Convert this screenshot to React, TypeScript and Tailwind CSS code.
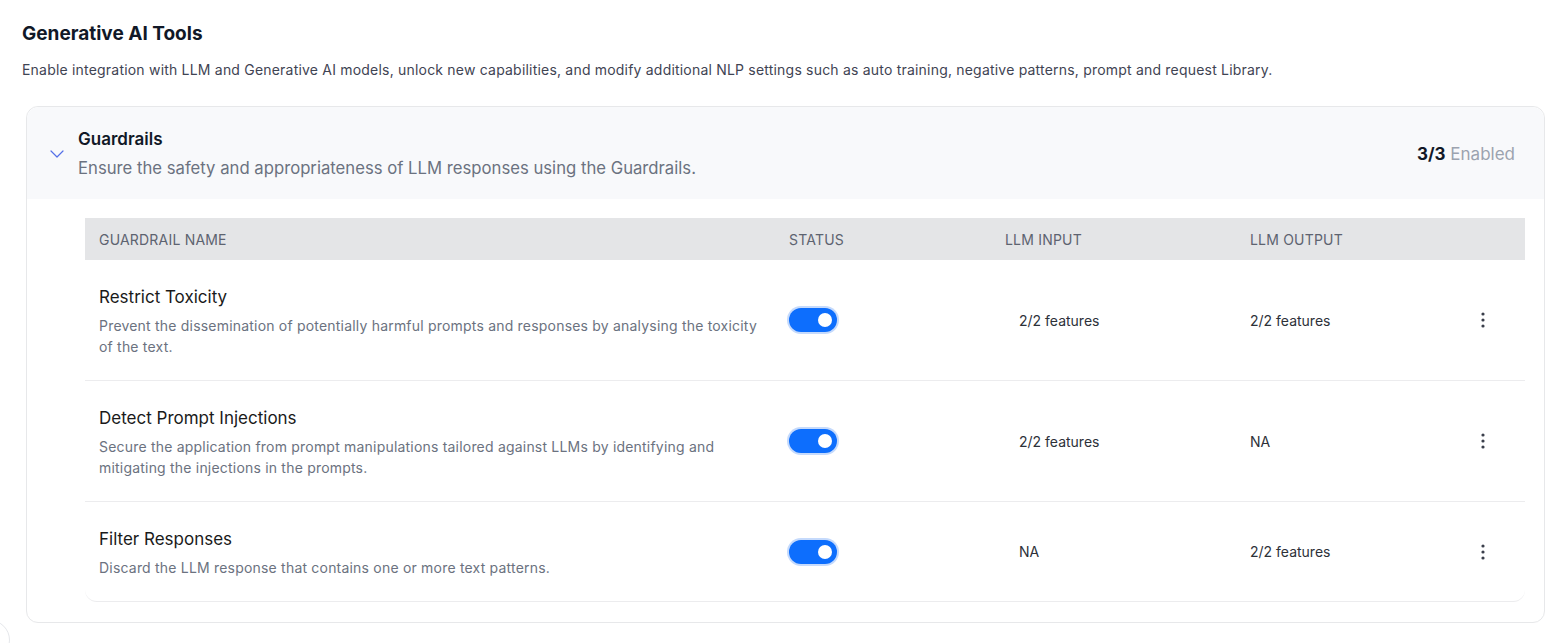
import React from "react";

const rows = [
  {
    title: "Restrict Toxicity",
    desc: "Prevent the dissemination of potentially harmful prompts and responses by analysing the toxicity of the text.",
    input: "2/2 features",
    output: "2/2 features",
  },
  {
    title: "Detect Prompt Injections",
    desc: "Secure the application from prompt manipulations tailored against LLMs by identifying and mitigating the injections in the prompts.",
    input: "2/2 features",
    output: "NA",
  },
  {
    title: "Filter Responses",
    desc: "Discard the LLM response that contains one or more text patterns.",
    input: "NA",
    output: "2/2 features",
  },
];

function Toggle() {
  return (
    <div className="w-[48px] h-[24px] rounded-full bg-[#0d6efd] ring-2 ring-[#c5dafc] flex items-center justify-end pr-[5px]">
      <div className="w-[14px] h-[14px] rounded-full bg-white" />
    </div>
  );
}

function Kebab() {
  return (
    <svg width="4" height="16" viewBox="0 0 4 16" fill="#3a3f4b">
      <circle cx="2" cy="2" r="1.6" />
      <circle cx="2" cy="8" r="1.6" />
      <circle cx="2" cy="14" r="1.6" />
    </svg>
  );
}

export default function App() {
  return (
    <div
      className="relative w-[1560px] h-[643px] overflow-hidden bg-white pl-[22px] pt-[20px]"
      style={{ fontFamily: "Inter, 'Noto Sans', sans-serif" }}
    >
      <h1 className="text-[19px] leading-[28px] font-bold text-[#111827]">Generative AI Tools</h1>
      <p className="mt-[12px] text-[14px] leading-[20px] tracking-[0.2px] text-[#3f4453]">
        Enable integration with LLM and Generative AI models, unlock new capabilities, and modify additional NLP settings such as auto training, negative patterns, prompt and request Library.
      </p>

      <div className="mt-[26px] ml-[4px] w-[1519px] rounded-xl border border-[#e7e8ea] pb-[20px]">
        <div className="flex items-center rounded-t-xl bg-[#f8f9fb] pt-[20px] pb-[19px] pl-[23px] pr-[29px]">
          <svg width="14" height="8" viewBox="0 0 14 8" fill="none" className="mr-[14px] mt-[1px]">
            <path d="M1 1l6 6 6-6" stroke="#5470e8" strokeWidth="1.2" strokeLinecap="round" strokeLinejoin="round" />
          </svg>
          <div className="flex-1 flex flex-col gap-[4px]">
            <div className="text-[17px] leading-[25px] font-semibold text-[#111827]">Guardrails</div>
            <div className="text-[16.7px] leading-[24px] text-[#6b7280]">
              Ensure the safety and appropriateness of LLM responses using the Guardrails.
            </div>
          </div>
          <div className="text-[17px] leading-[24px]">
            <span className="font-bold text-[#111827]">3/3</span>{" "}
            <span className="text-[#9ca3af]">Enabled</span>
          </div>
        </div>

        <div className="ml-[58px] mt-[19px] w-[1440px]">
          <div className="grid grid-cols-[690px_216px_245px_204px_85px] h-[42px] items-center bg-[#e4e5e7] text-[14px] text-[#5d6370] uppercase tracking-[0.2px]">
            <div className="pl-[14px]">Guardrail Name</div>
            <div className="pl-[14px]">Status</div>
            <div className="pl-[14px]">LLM Input</div>
            <div className="pl-[14px]">LLM Output</div>
            <div />
          </div>
          {rows.map((r, i) => (
            <div
              key={r.title}
              className={`grid grid-cols-[690px_216px_245px_204px_85px] items-center border-b border-[#ececee] ${
                i === rows.length - 1 ? "rounded-b-xl" : ""
              }`}
            >
              <div className="pl-[14px] pr-[16px] pt-[25px] pb-[23px]">
                <div className="text-[17px] leading-[24px] text-[#1a1a1a]">{r.title}</div>
                <div className="mt-[6px] text-[14px] leading-[21px] tracking-[0.2px] text-[#6b7280]">{r.desc}</div>
              </div>
              <div className="pl-[14px]">
                <Toggle />
              </div>
              <div className="pl-[28px] text-[14px] text-[#2d3139]">{r.input}</div>
              <div className="pl-[14px] text-[14px] text-[#2d3139]">{r.output}</div>
              <div className="flex justify-center">
                <Kebab />
              </div>
            </div>
          ))}
        </div>
      </div>

      <div className="absolute left-[-30px] top-[620px] w-[40px] h-[40px] rounded-full border border-[#e5e7eb] bg-white" />
    </div>
  );
}
